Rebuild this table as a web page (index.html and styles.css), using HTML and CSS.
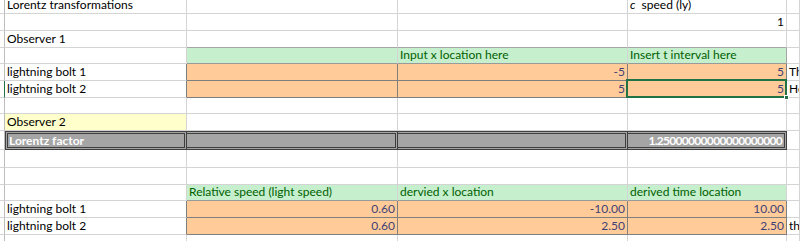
FILE: index.html
```html
<!DOCTYPE html>
<html>
<head>
<meta charset="utf-8">
<link rel="stylesheet" href="styles.css">
</head>
<body>
<div class="sheet">
  <!-- row 1 -->
  <div class="c hd"></div><div class="c">Lorentz transformations</div><div class="c"></div><div class="c"></div><div class="c"><i class="ci">c</i>&nbsp; speed (ly)</div><div class="c"></div>
  <!-- row 2 -->
  <div class="c hd"></div><div class="c"></div><div class="c"></div><div class="c"></div><div class="c r">1</div><div class="c"></div>
  <!-- row 3 -->
  <div class="c hd"></div><div class="c">Observer 1</div><div class="c above"></div><div class="c above"></div><div class="c above"></div><div class="c"></div>
  <!-- row 4 -->
  <div class="c hd"></div><div class="c"></div><div class="c good gb"></div><div class="c good gb">Input x location here</div><div class="c good gb edge">Insert t interval here</div><div class="c"></div>
  <!-- row 5 -->
  <div class="c hd"></div><div class="c left-of">lightning bolt 1</div><div class="c input"></div><div class="c input r">-5</div><div class="c input r">5</div><div class="c">Th</div>
  <!-- row 6 -->
  <div class="c hd sel-row"></div><div class="c left-of">lightning bolt 2</div><div class="c input"></div><div class="c input r">5</div><div class="c input r sel">5</div><div class="c">He</div>
  <!-- row 7 -->
  <div class="c hd"></div><div class="c"></div><div class="c"></div><div class="c"></div><div class="c"></div><div class="c"></div>
  <!-- row 8 -->
  <div class="c hd"></div><div class="c note">Observer 2</div><div class="c"></div><div class="c"></div><div class="c"></div><div class="c"></div>
  <!-- row 9 -->
  <div class="c hd"></div><div class="c check first">Lorentz factor</div><div class="c check"></div><div class="c check"></div><div class="c check r num">1.25000000000000000000</div><div class="c"></div>
  <!-- row 10 -->
  <div class="c hd"></div><div class="c"></div><div class="c"></div><div class="c"></div><div class="c"></div><div class="c"></div>
  <!-- row 11 -->
  <div class="c hd"></div><div class="c"></div><div class="c"></div><div class="c"></div><div class="c"></div><div class="c"></div>
  <!-- row 12 -->
  <div class="c hd"></div><div class="c"></div><div class="c good gb">Relative speed (light speed)</div><div class="c good gb">dervied x location</div><div class="c good gb">derived time location</div><div class="c"></div>
  <!-- row 13 -->
  <div class="c hd"></div><div class="c left-of">lightning bolt 1</div><div class="c input r">0.60</div><div class="c input r">-10.00</div><div class="c input r">10.00</div><div class="c"></div>
  <!-- row 14 -->
  <div class="c hd"></div><div class="c left-of">lightning bolt 2</div><div class="c input r">0.60</div><div class="c input r">2.50</div><div class="c input r">2.50</div><div class="c">th</div>
  <!-- row 15 -->
  <div class="c hd"></div><div class="c"></div><div class="c"></div><div class="c"></div><div class="c"></div><div class="c"></div>
</div>
</body>
</html>
```

FILE: styles.css
```css
html, body {
  margin: 0;
  padding: 0;
  overflow: hidden;
  background: #ffffff;
}

body {
  width: 800px;
  height: 241px;
  font-family: Lato, "Open Sans", sans-serif;
  font-size: 12px;
  color: #000000;
}

.sheet {
  display: grid;
  grid-template-columns: 5px 182px 211px 230px 159px 13px;
  grid-template-rows: 17px 17px 17px 16px 17px 17px 16px 17px 19px 18px 17px 16px 17px 17px 17px;
  margin-top: -3px;
}

.c {
  box-sizing: border-box;
  border-right: 1px solid #d4d4d4;
  border-bottom: 1px solid #d4d4d4;
  display: flex;
  align-items: flex-end;
  padding: 0 2px 1px 2px;
  line-height: 15px;
  white-space: nowrap;
  overflow: hidden;
  min-width: 0;
}

.r {
  justify-content: flex-end;
}

.hd {
  padding: 0;
  border-right-color: #bdbdbd;
}

.sel-row {
  border-right-color: #217346;
}

.ci {
  font-style: italic;
}

.above {
  border-bottom-color: #a6a6a6;
}

.good {
  background: #c6efce;
  color: #006100;
}

.gb {
  border-bottom-color: #9a9a9a;
}

.edge {
  border-right-color: #a6a6a6;
}

.input {
  background: #ffcc99;
  color: #3f3f76;
  border-right-color: #7f7f7f;
  border-bottom-color: #7f7f7f;
}

.left-of {
  border-right-color: #7f7f7f;
}

.note {
  background: #ffffcc;
}

.check {
  background: #a5a5a5;
  color: #ffffff;
  font-weight: bold;
  border-top: 3px double #3f3f3f;
  border-bottom: 3px double #3f3f3f;
  border-right: 3px double #3f3f3f;
  line-height: 13px;
  padding: 0 1px;
}

.check.first {
  border-left: 3px double #3f3f3f;
}

.num {
  letter-spacing: -0.7px;
  padding-right: 2px;
}

.sel {
  position: relative;
  overflow: visible;
}

.sel::after {
  content: "";
  position: absolute;
  left: -2px;
  top: -2px;
  right: -1px;
  bottom: -1px;
  border: 2px solid #217346;
}

.sel::before {
  content: "";
  position: absolute;
  right: -3px;
  bottom: -3px;
  width: 5px;
  height: 5px;
  background: #217346;
  border: 1px solid #ffffff;
  box-sizing: border-box;
  z-index: 2;
}
```
